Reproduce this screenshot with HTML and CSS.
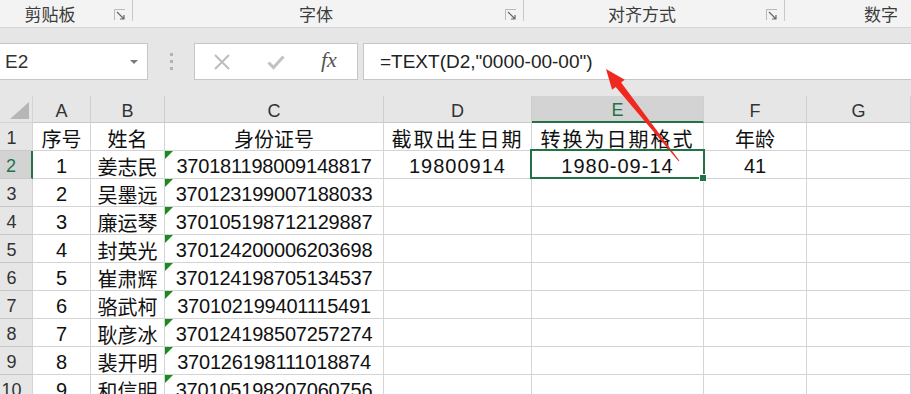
FILE: index.html
```html
<!DOCTYPE html>
<html lang="zh-CN">
<head>
  <meta charset="utf-8">
  <title>身份证号提取出生日期</title>
  <link rel="stylesheet" href="styles.css">
</head>
<body>
  <div class="ribbon">
    <div class="group g-clip">
      <span class="label">剪贴板</span>
      <svg class="launcher" viewBox="0 0 12 12"><path d="M0.5 11V0.5H11" fill="none" stroke="#b9b9b9"/><path d="M3 3L10 10M10 6V10H6" fill="none" stroke="#666" stroke-width="1.2"/></svg>
    </div>
    <div class="group g-font">
      <span class="label">字体</span>
      <svg class="launcher" viewBox="0 0 12 12"><path d="M0.5 11V0.5H11" fill="none" stroke="#b9b9b9"/><path d="M3 3L10 10M10 6V10H6" fill="none" stroke="#666" stroke-width="1.2"/></svg>
    </div>
    <div class="group g-align">
      <span class="label">对齐方式</span>
      <svg class="launcher" viewBox="0 0 12 12"><path d="M0.5 11V0.5H11" fill="none" stroke="#b9b9b9"/><path d="M3 3L10 10M10 6V10H6" fill="none" stroke="#666" stroke-width="1.2"/></svg>
    </div>
    <div class="group g-num">
      <span class="label">数字</span>
    </div>
  </div>

  <div class="bar">
    <div class="namebox">
      <span>E2</span>
      <span class="caret"></span>
    </div>
    <div class="grip"><i></i><i></i><i></i></div>
    <div class="btns">
      <svg class="btn-icon" viewBox="0 0 18 18"><path d="M2 2L16 16M16 2L2 16" stroke="#bdbdbd" stroke-width="2"/></svg>
      <svg class="btn-icon" viewBox="0 0 18 18"><path d="M1.5 9.5L6.5 14.5L16.5 3.5" fill="none" stroke="#c2c2c2" stroke-width="3"/></svg>
      <span class="fx">fx</span>
    </div>
    <div class="formula">=TEXT(D2,"0000-00-00")</div>
  </div>

  <div class="sheet" id="sheet">
    <!-- cells are built by the script below -->
  </div>

  <svg class="arrow" width="911" height="394" viewBox="0 0 911 394">
    <polygon points="606,69 612.1,89.7 615.7,86.9 678.6,161.3 679.4,160.7 621.1,82.5 624.7,79.7" fill="#f0281e"/>
  </svg>

  <script>
    const COLS = ['A', 'B', 'C', 'D', 'E', 'F', 'G'];
    const PEOPLE = [
      ['姜志民', '370181198009148817'],
      ['吴墨远', '370123199007188033'],
      ['廉运琴', '370105198712129887'],
      ['封英光', '370124200006203698'],
      ['崔肃辉', '370124198705134537'],
      ['骆武柯', '370102199401115491'],
      ['耿彦冰', '370124198507257274'],
      ['裴开明', '370126198111018874'],
      ['和信明', '370105198207060756']
    ];

    const sheet = document.getElementById('sheet');
    let html = '<div class="corner"></div>';
    html += COLS.map(c => `<div class="ch${c === 'E' ? ' on' : ''}">${c}</div>`).join('');
    html += '<div class="ch rest"></div>';

    html += `
      <div class="rh">1</div>
      <div class="cell">序号</div>
      <div class="cell">姓名</div>
      <div class="cell">身份证号</div>
      <div class="cell spread">截取出生日期</div>
      <div class="cell spread">转换为日期格式</div>
      <div class="cell">年龄</div>
      <div class="cell"></div>
      <div class="cell rest"></div>
    `;

    PEOPLE.forEach((p, i) => {
      const first = i === 0;
      html += `
        <div class="rh${first ? ' on' : ''}">${i + 2}</div>
        <div class="cell">${i + 1}</div>
        <div class="cell">${p[0]}</div>
        <div class="cell id">${p[1]}</div>
        <div class="cell date">${first ? '19800914' : ''}</div>
        <div class="cell date${first ? ' sel' : ''}">${first ? '1980-09-14' : ''}</div>
        <div class="cell">${first ? '41' : ''}</div>
        <div class="cell"></div>
        <div class="cell rest"></div>
      `;
    });
    sheet.innerHTML = html;
  </script>
</body>
</html>
```

FILE: styles.css
```css
html, body {
  margin: 0;
  height: 394px;
  overflow: hidden;
}

body {
  position: relative;
  font-family: "Liberation Sans", "Noto Sans CJK SC", sans-serif;
  background: #e6e6e6;
  color: #222;
}

/* ribbon group labels */
.ribbon {
  display: flex;
  height: 27px;
  background: #f3f3f3;
  border-bottom: 1px solid #d5d5d5;
}

.group {
  display: flex;
  align-items: center;
  border-right: 1px solid #c9c9c9;
  height: 21px;
}

.label {
  flex: 1;
  text-align: center;
  font-family: "Noto Sans CJK SC", sans-serif;
  font-size: 17px;
  line-height: 21px;
  color: #3c3c3c;
  padding-top: 5px;
}

.launcher {
  width: 12px;
  height: 12px;
  margin: 9px 6px 0 6px;
}

.g-clip { width: 132px; }
.g-clip .label { padding-right: 8px; }
.g-font { width: 390px; }
.g-align { width: 260px; }
.g-num { flex: 1; border-right: none; }
.g-num .label { text-align: left; padding-left: 79px; }

/* formula bar */
.bar {
  display: flex;
  height: 37px;
  padding: 15px 0 16px;
}

.namebox {
  width: 148px;
  box-sizing: border-box;
  background: white;
  border: 1px solid #c6c6c6;
  border-left: none;
  display: flex;
  align-items: center;
  justify-content: space-between;
  padding: 0 9px 0 5px;
  font-size: 19px;
  color: #333;
}

.caret {
  width: 0;
  height: 0;
  border-left: 4px solid transparent;
  border-right: 4px solid transparent;
  border-top: 4px solid #7a7a7a;
}

.grip {
  width: 46px;
  display: flex;
  flex-direction: column;
  align-items: center;
  justify-content: center;
  gap: 4px;
}

.grip i {
  display: block;
  width: 3px;
  height: 3px;
  background: #b3b3b3;
}

.btns {
  width: 164px;
  box-sizing: border-box;
  background: white;
  border: 1px solid #c6c6c6;
  display: flex;
  align-items: center;
  padding-left: 18px;
  gap: 36px;
}

.btn-icon {
  width: 18px;
  height: 18px;
}

.fx {
  font-family: "Liberation Serif", serif;
  font-style: italic;
  font-size: 22px;
  color: #555;
  margin-top: -4px;
}

.formula {
  flex: 1;
  margin-left: 5px;
  background: white;
  border: 1px solid #c6c6c6;
  border-right: none;
  padding-left: 16px;
  font-size: 19px;
  line-height: 35px;
  color: #222;
}

/* worksheet grid */
.sheet {
  display: grid;
  grid-template-columns: 33px 58px 74px 219px 148px 172px 103px 104px 1fr;
  grid-template-rows: 27px;
  grid-auto-rows: 28px;
  background: white;
}

.sheet > div {
  box-sizing: border-box;
  border-right: 1px solid #d4d4d4;
  border-bottom: 1px solid #d4d4d4;
  display: flex;
  align-items: center;
  justify-content: center;
  position: relative;
}

.corner, .ch, .rh {
  background: #e6e6e6;
  color: #333;
  font-size: 18px;
}

.corner::after {
  content: "";
  position: absolute;
  right: 3px;
  bottom: 3px;
  border-left: 19px solid transparent;
  border-bottom: 17px solid #b6b6b6;
}

.sheet > .ch {
  padding-top: 4px;
  border-right-color: #cfcfcf;
  border-bottom-color: #c9c9c9;
}

.sheet > .ch.on {
  background: #d3d3d3;
  color: #217346;
  border-bottom: 2px solid #217346;
}

.sheet > .rh {
  padding: 3px 9px 0 0;
  border-bottom-color: #c9c9c9;
}

.sheet > .rh.on {
  background: #d3d3d3;
  color: #217346;
  border-right: 2px solid #217346;
}

.sheet > .rest {
  border-right: none;
}

.cell {
  font-size: 20px;
  color: #111;
  padding-top: 3px;
}

.spread { letter-spacing: 2px; }
.id { letter-spacing: -0.2px; }
.date { letter-spacing: 1px; }

.id::before {
  content: "";
  position: absolute;
  top: 0;
  left: 0;
  border-top: 8px solid #1c8a1c;
  border-right: 8px solid transparent;
}

.sel::after {
  content: "";
  position: absolute;
  top: -2px;
  left: -2px;
  right: -2px;
  bottom: -1px;
  border: 2px solid #217346;
  z-index: 2;
}

.sel::before {
  content: "";
  position: absolute;
  right: -4px;
  bottom: -4px;
  width: 6px;
  height: 6px;
  background: #217346;
  border: 1px solid white;
  z-index: 3;
}

.arrow {
  position: absolute;
  top: 0;
  left: 0;
  pointer-events: none;
}
```
